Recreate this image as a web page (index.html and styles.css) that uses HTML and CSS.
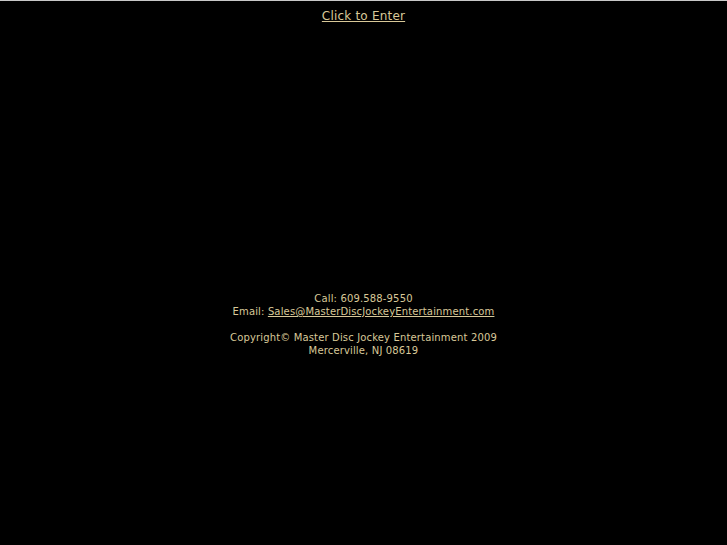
FILE: index.html
```html
<!DOCTYPE html>
<html>
<head>
<meta charset="utf-8">
<link rel="stylesheet" href="styles.css">
</head>
<body>
<div class="page">
  <div class="enter"><a href="#">Click to Enter</a></div>
  <div class="footer">
    <p>Call: 609.588-9550<br>Email: <a href="#">Sales@MasterDiscJockeyEntertainment.com</a></p>
    <p>Copyright© Master Disc Jockey Entertainment 2009<br>Mercerville, NJ 08619</p>
  </div>
</div>
</body>
</html>
```
FILE: styles.css
```css
html, body {
  margin: 0;
  padding: 0;
  background: #000;
}
body {
  border-top: 1px solid #c8c8c8;
  font-family: "DejaVu Sans", Verdana, sans-serif;
  color: #d8c898;
}
a { color: #d8c898; }
.page {
  text-align: center;
}
.enter {
  font-size: 12px;
  letter-spacing: 0.2px;
  line-height: 16px;
  padding-top: 7px;
}
.footer {
  margin-top: 268px;
  font-size: 10px;
  letter-spacing: 0.15px;
  line-height: 13px;
}
.footer p {
  margin: 0 0 13px 0;
}
```
